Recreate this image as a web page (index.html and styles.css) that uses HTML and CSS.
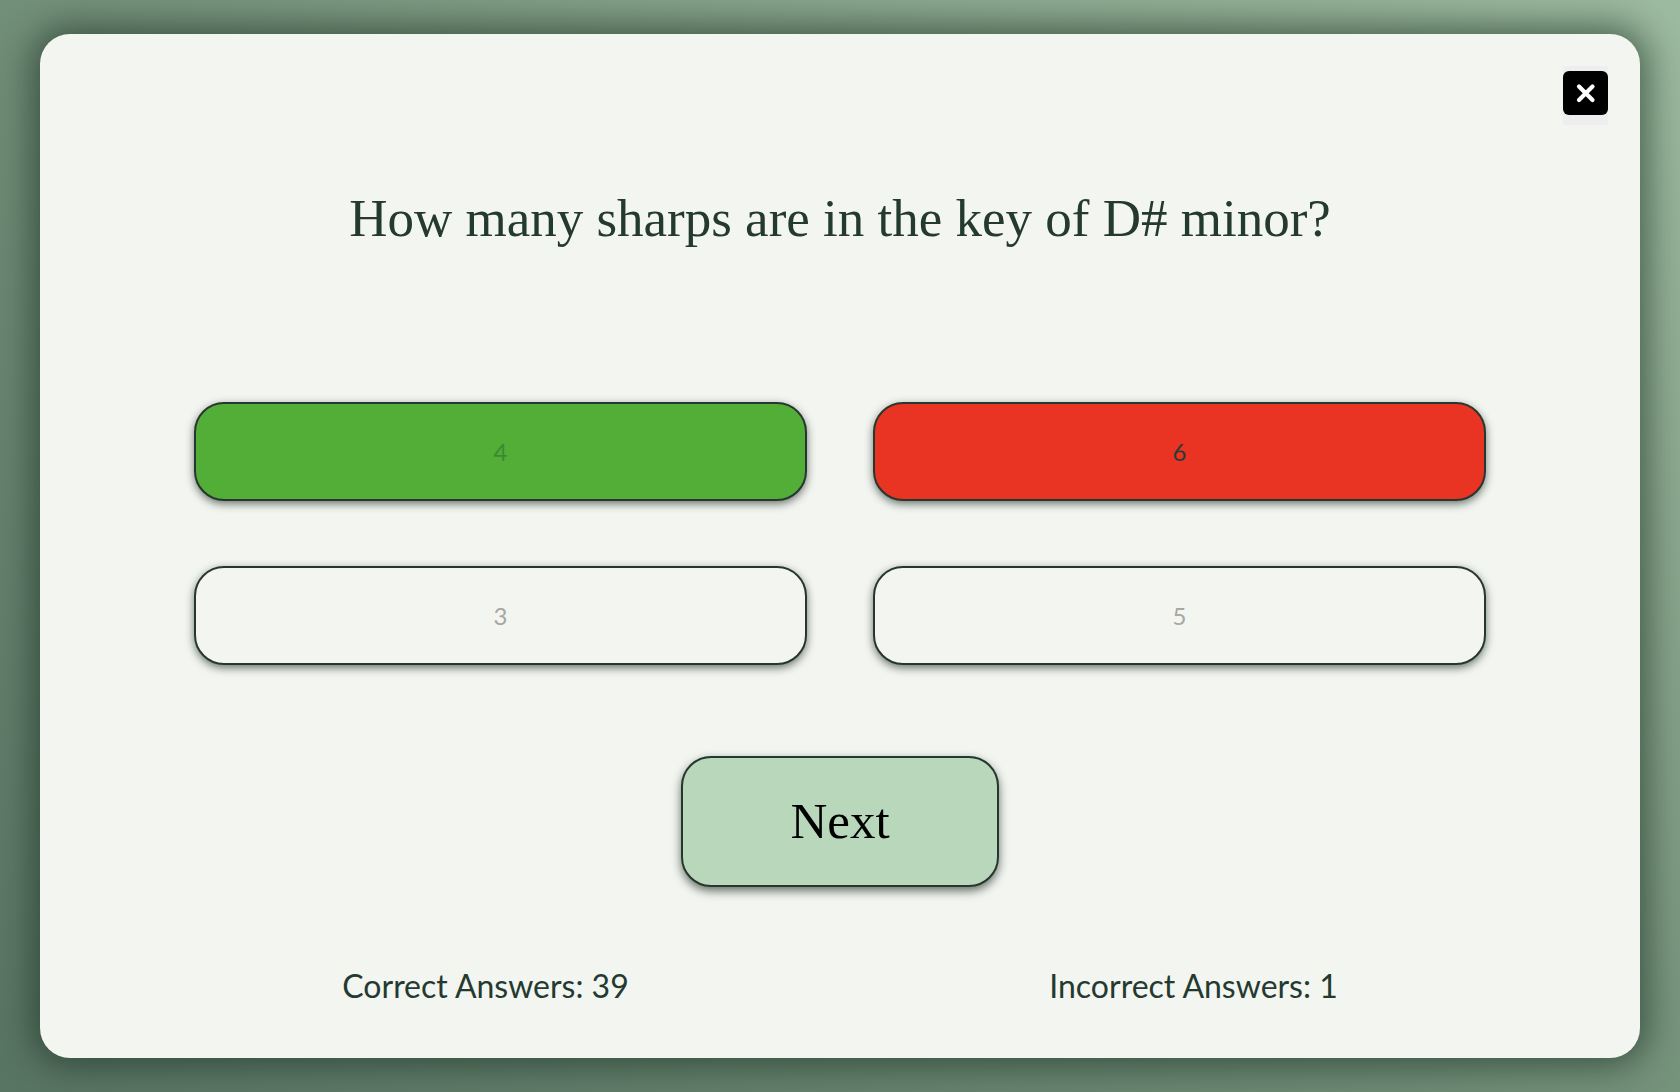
FILE: index.html
```html
<!DOCTYPE html>
<html lang="en">
<head>
<meta charset="utf-8">
<title>Key Signature Quiz</title>
<link rel="stylesheet" href="styles.css">
</head>
<body>
<main class="card">
  <button class="close" aria-label="Close">
    <svg width="45" height="44" viewBox="0 0 45 44" aria-hidden="true">
      <rect x="0" y="0" width="45" height="44" rx="6" fill="#000"/>
      <path d="M16 15.5 L29.5 29 M29.5 15.5 L16 29" stroke="#fff" stroke-width="4.2" stroke-linecap="round"/>
    </svg>
  </button>
  <h1 class="question">How many sharps are in the key of D# minor?</h1>
  <div class="answers">
    <button class="answer correct" disabled>4</button>
    <button class="answer wrong" disabled>6</button>
    <button class="answer" disabled>3</button>
    <button class="answer" disabled>5</button>
  </div>
  <button class="next">Next</button>
  <div class="stats">
    <span class="stat">Correct Answers: 39</span>
    <span class="stat">Incorrect Answers: 1</span>
  </div>
</main>
</body>
</html>
```
FILE: styles.css
```css
html, body {
  margin: 0;
  padding: 0;
}

body {
  height: 100vh;
  display: flex;
  align-items: center;
  justify-content: center;
  background: linear-gradient(35deg, #587462 0%, #6f8c76 45%, #8aa68d 75%, #9dbba0 100%);
  font-family: "Lato", "Liberation Sans", sans-serif;
  color: #243a30;
  overflow: hidden;
}

.card {
  position: relative;
  box-sizing: border-box;
  width: 1600px;
  height: 1024px;
  background: #f3f5f0;
  border-radius: 30px;
  box-shadow: 0 0 34px 8px rgba(28, 48, 36, 0.62);
  display: flex;
  flex-direction: column;
  align-items: center;
  padding-top: 152px;
}

.close {
  position: absolute;
  top: 32px;
  right: 32px;
  width: 45px;
  height: 59px;
  padding: 5px 0 10px;
  margin: 0;
  border: none;
  background: #eeeeee;
  display: flex;
  align-items: flex-start;
  cursor: pointer;
}

.close svg {
  display: block;
}

.question {
  margin: 0;
  font-family: "Liberation Serif", "DejaVu Serif", serif;
  font-weight: 400;
  font-size: 53px;
  line-height: 64px;
  color: #243a30;
  text-align: center;
}

.answers {
  margin-top: 152px;
  display: grid;
  grid-template-columns: 613px 613px;
  grid-auto-rows: 99px;
  column-gap: 66px;
  row-gap: 65px;
}

.answer {
  box-sizing: border-box;
  border: 2px solid #27372f;
  border-radius: 30px;
  background: #f3f5f0;
  box-shadow: 0 3px 9px rgba(25, 40, 32, 0.62);
  font-family: "Lato", "Liberation Sans", sans-serif;
  font-size: 24px;
  color: #a6a7a4;
  padding: 0;
}

.answer.correct {
  background: #53ae38;
  color: #3c8a30;
}

.answer.wrong {
  background: #e93323;
  color: #2b3a33;
}

.next {
  margin-top: 91px;
  box-sizing: border-box;
  width: 318px;
  height: 131px;
  border: 2px solid #27372f;
  border-radius: 30px;
  background: #b8d7bb;
  box-shadow: 0 4px 10px rgba(25, 40, 32, 0.65);
  font-family: "Liberation Serif", "DejaVu Serif", serif;
  font-size: 51px;
  color: #000;
  padding: 0 0 2px;
  cursor: pointer;
}

.stats {
  margin-top: 80px;
  width: 1416px;
  display: flex;
  justify-content: space-around;
}

.stat {
  font-size: 32px;
  line-height: 38.4px;
  color: #243a30;
}
```
